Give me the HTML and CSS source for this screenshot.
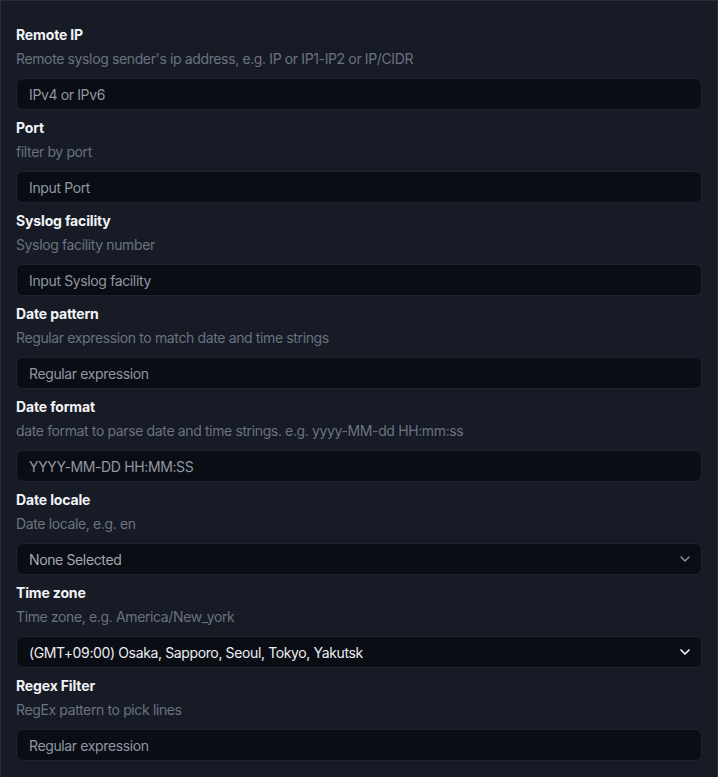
FILE: index.html
```html
<!DOCTYPE html>
<html lang="en">
<head>
<meta charset="utf-8">
<link rel="stylesheet" href="styles.css">
</head>
<body>
<div class="panel">
  <div class="field">
    <div class="label">Remote IP</div>
    <div class="desc">Remote syslog sender's ip address, e.g. IP or IP1-IP2 or IP/CIDR</div>
    <input class="input" type="text" placeholder="IPv4 or IPv6">
  </div>
  <div class="field">
    <div class="label">Port</div>
    <div class="desc">filter by port</div>
    <input class="input" type="text" placeholder="Input Port">
  </div>
  <div class="field">
    <div class="label">Syslog facility</div>
    <div class="desc">Syslog facility number</div>
    <input class="input" type="text" placeholder="Input Syslog facility">
  </div>
  <div class="field">
    <div class="label">Date pattern</div>
    <div class="desc">Regular expression to match date and time strings</div>
    <input class="input" type="text" placeholder="Regular expression">
  </div>
  <div class="field">
    <div class="label">Date format</div>
    <div class="desc">date format to parse date and time strings. e.g. yyyy-MM-dd HH:mm:ss</div>
    <input class="input" type="text" placeholder="YYYY-MM-DD HH:MM:SS">
  </div>
  <div class="field">
    <div class="label">Date locale</div>
    <div class="desc">Date locale, e.g. en</div>
    <div class="select muted">
      <span>None Selected</span>
      <svg class="chev" width="10" height="6" viewBox="0 0 10 6"><path d="M1 1l4 4 4-4" fill="none" stroke="currentColor" stroke-width="1.5" stroke-linecap="round" stroke-linejoin="round"/></svg>
    </div>
  </div>
  <div class="field">
    <div class="label">Time zone</div>
    <div class="desc">Time zone, e.g. America/New_york</div>
    <div class="select">
      <span>(GMT+09:00) Osaka, Sapporo, Seoul, Tokyo, Yakutsk</span>
      <svg class="chev" width="10" height="6" viewBox="0 0 10 6"><path d="M1 1l4 4 4-4" fill="none" stroke="currentColor" stroke-width="1.7" stroke-linecap="round" stroke-linejoin="round"/></svg>
    </div>
  </div>
  <div class="field">
    <div class="label">Regex Filter</div>
    <div class="desc">RegEx pattern to pick lines</div>
    <input class="input" type="text" placeholder="Regular expression">
  </div>
</div>
</body>
</html>
```
FILE: styles.css
```css
html, body {
  margin: 0;
  padding: 0;
  background: #161b26;
}
body {
  font-family: Inter, "Noto Sans", sans-serif;
  font-size: 14px;
  color: #f3f4f6;
}
.panel {
  box-sizing: border-box;
  width: 718px;
  min-height: 790px;
  border: 1px solid #262d3d;
  padding: 24px 15px 0 15px;
  background: #161b26;
}
.field {
  display: flex;
  flex-direction: column;
  margin-bottom: 8px;
}
.label {
  font-weight: 700;
  font-size: 14px;
  line-height: 20px;
  letter-spacing: -0.15px;
  color: #f3f4f6;
}
.desc {
  margin-top: 4px;
  font-size: 14px;
  line-height: 20px;
  letter-spacing: -0.37px;
  color: #6b7280;
}
.input, .select {
  box-sizing: border-box;
  margin-top: 9px;
  height: 32px;
  width: 100%;
  background: #0a0d14;
  border: 1px solid #1d2333;
  border-radius: 7px;
  padding: 0 12px;
  font-family: Inter, "Noto Sans", sans-serif;
  font-size: 14px;
  letter-spacing: -0.37px;
  color: #e5e7eb;
  outline: none;
}
.input::placeholder {
  color: #9097a3;
}
.select {
  display: flex;
  align-items: center;
  justify-content: space-between;
  color: #eceef2;
}
.select.muted {
  color: #a2a8b2;
}
.chev {
  margin-right: -1px;
  color: #f3f4f6;
}
.select.muted .chev {
  color: #8a909b;
}
```
